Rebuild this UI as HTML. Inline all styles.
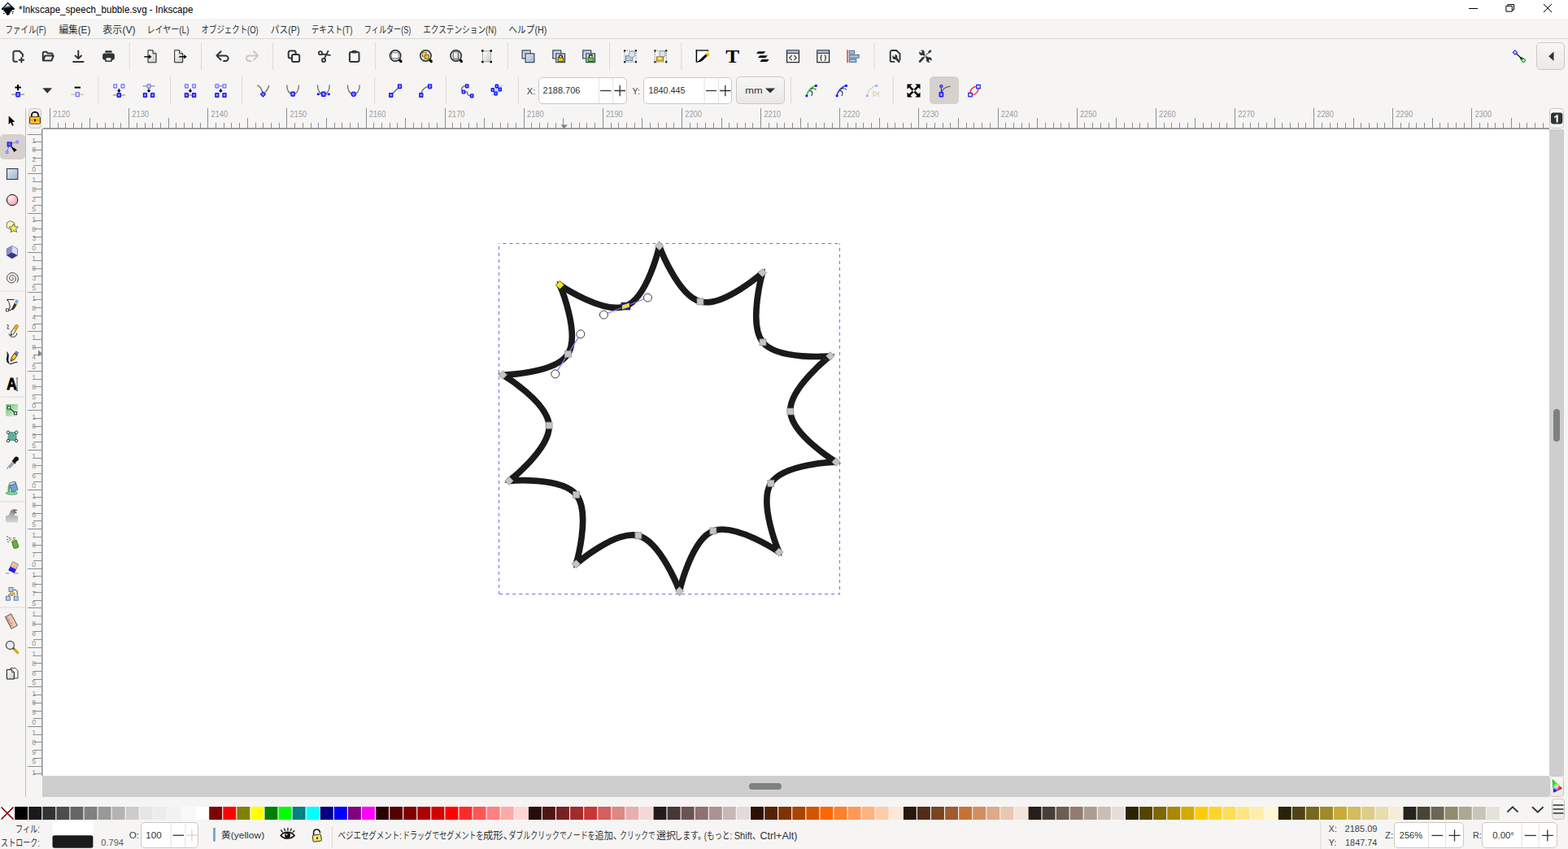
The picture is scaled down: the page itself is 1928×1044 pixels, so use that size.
<!DOCTYPE html>
<html lang="ja"><head><meta charset="utf-8"><title>*Inkscape_speech_bubble.svg - Inkscape</title>
<style>
html,body{margin:0;padding:0}
body{width:1928px;height:1044px;overflow:hidden;position:relative;background:#f6f5f4;font-family:"Liberation Sans",sans-serif;}
.abs{position:absolute}
.t{position:absolute;white-space:pre;line-height:0;transform-origin:0 0;font-family:"Liberation Sans",sans-serif}
.box{position:absolute;box-sizing:border-box;border:1px solid #cdc7c2;border-radius:5px;background:#fff}
.btn{position:absolute;box-sizing:border-box;border:1px solid #cdc7c2;border-radius:5px;background:linear-gradient(#f7f6f5,#ebe9e7)}
svg{position:absolute;left:0;top:0}
text{font-family:"Liberation Sans",sans-serif;white-space:pre}
text.jp{font-family:"Liberation Sans","Noto Sans CJK JP",sans-serif}
</style></head>
<body>
<div class="abs" style="left:0;top:0;width:1928px;height:23px;background:#fff"></div>
<div class="abs" style="left:0;top:47px;width:1928px;height:1px;background:#dcd9d6"></div>
<div class="abs" style="left:52px;top:159px;width:1853px;height:795px;background:#fff"></div>
<div class="abs" style="left:52px;top:954px;width:1853px;height:26px;background:#cecece"></div>
<div class="abs" style="left:1905px;top:159px;width:18px;height:794.5px;background:#cecece"></div>
<div class="abs" style="left:921px;top:963px;width:40px;height:8px;border-radius:4px;background:#7e8182"></div>
<div class="abs" style="left:1910px;top:503px;width:8px;height:40px;border-radius:4px;background:#7e8182"></div>
<div class="abs" style="left:31px;top:133px;width:1px;height:847px;background:#c2beba"></div>
<div class="abs" style="left:0;top:165px;width:30.5px;height:31px;border-radius:5px;background:#d6d1cd"></div>
<div class="abs" style="left:1143px;top:94.3px;width:36px;height:33.3px;border-radius:5px;background:#d6d1cd"></div>
<div class="box" style="left:661.7px;top:94.7px;width:109.0px;height:33.0px"></div>
<div class="box" style="left:790.6px;top:94.7px;width:109.8px;height:33.0px"></div>
<div class="btn" style="left:905.1px;top:94.3px;width:59.6px;height:33.3px"></div>
<div class="btn" style="left:1888.5px;top:52px;width:35px;height:34px"></div>
<div class="btn" style="left:34.6px;top:133.2px;width:16.8px;height:25px;border-radius:4px;background:#efedeb"></div>
<div class="btn" style="left:1905.3px;top:132.6px;width:17.3px;height:25.5px;border-radius:4px;background:#f8f7f6"></div>
<div class="btn" style="left:1905px;top:954px;width:18px;height:25.5px;border-radius:4px"></div>
<div class="btn" style="left:1907.6px;top:982.3px;width:16.6px;height:25.8px;border-radius:4px"></div>
<div class="box" style="left:173.3px;top:1010.5px;width:71.1px;height:32.9px"></div>
<div class="box" style="left:1713.9px;top:1011.0px;width:86.6px;height:32.2px"></div>
<div class="box" style="left:1822.1px;top:1011.0px;width:93.0px;height:32.2px"></div>
<div class="abs" style="left:1908px;top:957px;width:14px;height:19px;clip-path:polygon(1px 1.8px,12.8px 12.400px,2.300px 17.400px);background:radial-gradient(circle at 5.500px 11px,rgba(255,255,255,.95) 0,rgba(255,255,255,0) 4.500px),conic-gradient(from 0deg at 5.500px 11px,#80ff00 0deg,#ffff00 40deg,#ff0000 101deg,#ff00ff 155deg,#0000ff 206deg,#00ffff 270deg,#00ff00 334deg,#80ff00 360deg)"></div>
<svg width="1928" height="1044" viewBox="0 0 1928 1044">
<path d="M61 133V158M71 151V158M80 151V158M90 151V158M100 151V158M110 145V158M119 151V158M129 151V158M139 151V158M148 151V158M158 133V158M168 151V158M178 151V158M187 151V158M197 151V158M207 145V158M216 151V158M226 151V158M236 151V158M246 151V158M255 133V158M265 151V158M275 151V158M284 151V158M294 151V158M304 145V158M314 151V158M323 151V158M333 151V158M343 151V158M352 133V158M362 151V158M372 151V158M382 151V158M391 151V158M401 145V158M411 151V158M420 151V158M430 151V158M440 151V158M450 133V158M459 151V158M469 151V158M479 151V158M488 151V158M498 145V158M508 151V158M518 151V158M527 151V158M537 151V158M547 133V158M556 151V158M566 151V158M576 151V158M586 151V158M595 145V158M605 151V158M615 151V158M624 151V158M634 151V158M644 133V158M653 151V158M663 151V158M673 151V158M683 151V158M692 145V158M702 151V158M712 151V158M721 151V158M731 151V158M741 133V158M751 151V158M760 151V158M770 151V158M780 151V158M789 145V158M799 151V158M809 151V158M819 151V158M828 151V158M838 133V158M848 151V158M857 151V158M867 151V158M877 151V158M887 145V158M896 151V158M906 151V158M916 151V158M925 151V158M935 133V158M945 151V158M955 151V158M964 151V158M974 151V158M984 145V158M993 151V158M1003 151V158M1013 151V158M1023 151V158M1032 133V158M1042 151V158M1052 151V158M1061 151V158M1071 151V158M1081 145V158M1091 151V158M1100 151V158M1110 151V158M1120 151V158M1129 133V158M1139 151V158M1149 151V158M1159 151V158M1168 151V158M1178 145V158M1188 151V158M1197 151V158M1207 151V158M1217 151V158M1227 133V158M1236 151V158M1246 151V158M1256 151V158M1265 151V158M1275 145V158M1285 151V158M1295 151V158M1304 151V158M1314 151V158M1324 133V158M1333 151V158M1343 151V158M1353 151V158M1363 151V158M1372 145V158M1382 151V158M1392 151V158M1401 151V158M1411 151V158M1421 133V158M1431 151V158M1440 151V158M1450 151V158M1460 151V158M1469 145V158M1479 151V158M1489 151V158M1499 151V158M1508 151V158M1518 133V158M1528 151V158M1537 151V158M1547 151V158M1557 151V158M1567 145V158M1576 151V158M1586 151V158M1596 151V158M1605 151V158M1615 133V158M1625 151V158M1635 151V158M1644 151V158M1654 151V158M1664 145V158M1673 151V158M1683 151V158M1693 151V158M1702 151V158M1712 133V158M1722 151V158M1732 151V158M1741 151V158M1751 151V158M1761 145V158M1770 151V158M1780 151V158M1790 151V158M1800 151V158M1809 133V158M1819 151V158M1829 151V158M1838 151V158M1848 151V158M1858 145V158M1868 151V158M1877 151V158M1887 151V158M1897 151V158" stroke="#8a8e90" stroke-width="1" shape-rendering="crispEdges" transform="translate(.5 0)" fill="none"/>
<path d="M34 165H52M41 174H52M41 184H52M41 194H52M41 203H52M34 213H52M41 223H52M41 232H52M41 242H52M41 252H52M34 262H52M41 271H52M41 281H52M41 291H52M41 300H52M34 310H52M41 320H52M41 330H52M41 339H52M41 349H52M34 359H52M41 368H52M41 378H52M41 388H52M41 398H52M34 407H52M41 417H52M41 427H52M41 436H52M41 446H52M34 456H52M41 466H52M41 475H52M41 485H52M41 495H52M34 504H52M41 514H52M41 524H52M41 534H52M41 543H52M34 553H52M41 563H52M41 572H52M41 582H52M41 592H52M34 602H52M41 611H52M41 621H52M41 631H52M41 640H52M34 650H52M41 660H52M41 670H52M41 679H52M41 689H52M34 699H52M41 708H52M41 718H52M41 728H52M41 738H52M34 747H52M41 757H52M41 767H52M41 776H52M41 786H52M34 796H52M41 806H52M41 815H52M41 825H52M41 835H52M34 844H52M41 854H52M41 864H52M41 874H52M41 883H52M34 893H52M41 903H52M41 912H52M41 922H52M41 932H52M34 942H52M41 951H52" stroke="#8a8e90" stroke-width="1" shape-rendering="crispEdges" transform="translate(0 .5)" fill="none"/>
<rect x="53" y="157.3" width="1852" height="1.7" fill="#8b8f91"/>
<rect x="51" y="158.500" width="1.500" height="795.500" fill="#8b8f91"/>
<path d="M689.5 153.5h8.4l-4.2 4.5z" fill="#7b7f81"/>
<path d="M47 430.5v8l4.5-4z" fill="#7b7f81"/>
<text transform="translate(65.23 143.60) scale(0.9273 1)" font-size="10.00" fill="#9a9c9c">2120</text>
<text transform="translate(162.36 143.60) scale(0.9273 1)" font-size="10.00" fill="#9a9c9c">2130</text>
<text transform="translate(259.49 143.60) scale(0.9273 1)" font-size="10.00" fill="#9a9c9c">2140</text>
<text transform="translate(356.62 143.60) scale(0.9273 1)" font-size="10.00" fill="#9a9c9c">2150</text>
<text transform="translate(453.75 143.60) scale(0.9273 1)" font-size="10.00" fill="#9a9c9c">2160</text>
<text transform="translate(550.88 143.60) scale(0.9273 1)" font-size="10.00" fill="#9a9c9c">2170</text>
<text transform="translate(648.01 143.60) scale(0.9273 1)" font-size="10.00" fill="#9a9c9c">2180</text>
<text transform="translate(745.14 143.60) scale(0.9273 1)" font-size="10.00" fill="#9a9c9c">2190</text>
<text transform="translate(842.27 143.60) scale(0.9273 1)" font-size="10.00" fill="#9a9c9c">2200</text>
<text transform="translate(939.40 143.60) scale(0.9273 1)" font-size="10.00" fill="#9a9c9c">2210</text>
<text transform="translate(1036.53 143.60) scale(0.9273 1)" font-size="10.00" fill="#9a9c9c">2220</text>
<text transform="translate(1133.66 143.60) scale(0.9273 1)" font-size="10.00" fill="#9a9c9c">2230</text>
<text transform="translate(1230.79 143.60) scale(0.9273 1)" font-size="10.00" fill="#9a9c9c">2240</text>
<text transform="translate(1327.92 143.60) scale(0.9273 1)" font-size="10.00" fill="#9a9c9c">2250</text>
<text transform="translate(1425.05 143.60) scale(0.9273 1)" font-size="10.00" fill="#9a9c9c">2260</text>
<text transform="translate(1522.18 143.60) scale(0.9273 1)" font-size="10.00" fill="#9a9c9c">2270</text>
<text transform="translate(1619.31 143.60) scale(0.9273 1)" font-size="10.00" fill="#9a9c9c">2280</text>
<text transform="translate(1716.44 143.60) scale(0.9273 1)" font-size="10.00" fill="#9a9c9c">2290</text>
<text transform="translate(1813.57 143.60) scale(0.9273 1)" font-size="10.00" fill="#9a9c9c">2300</text>
<text transform="translate(39.13 175.60) scale(1.0000 1)" font-size="8.80" fill="#8f9192">1</text>
<text transform="translate(39.25 187.40) scale(1.0000 1)" font-size="8.80" fill="#8f9192">8</text>
<text transform="translate(39.25 199.20) scale(1.0000 1)" font-size="8.80" fill="#8f9192">2</text>
<text transform="translate(39.25 211.00) scale(1.0000 1)" font-size="8.80" fill="#8f9192">0</text>
<text transform="translate(39.13 224.16) scale(1.0000 1)" font-size="8.80" fill="#8f9192">1</text>
<text transform="translate(39.25 235.97) scale(1.0000 1)" font-size="8.80" fill="#8f9192">8</text>
<text transform="translate(39.25 247.76) scale(1.0000 1)" font-size="8.80" fill="#8f9192">2</text>
<text transform="translate(39.26 259.56) scale(1.0000 1)" font-size="8.80" fill="#8f9192">5</text>
<text transform="translate(39.13 272.73) scale(1.0000 1)" font-size="8.80" fill="#8f9192">1</text>
<text transform="translate(39.25 284.53) scale(1.0000 1)" font-size="8.80" fill="#8f9192">8</text>
<text transform="translate(39.28 296.33) scale(1.0000 1)" font-size="8.80" fill="#8f9192">3</text>
<text transform="translate(39.25 308.13) scale(1.0000 1)" font-size="8.80" fill="#8f9192">0</text>
<text transform="translate(39.13 321.30) scale(1.0000 1)" font-size="8.80" fill="#8f9192">1</text>
<text transform="translate(39.25 333.10) scale(1.0000 1)" font-size="8.80" fill="#8f9192">8</text>
<text transform="translate(39.28 344.90) scale(1.0000 1)" font-size="8.80" fill="#8f9192">3</text>
<text transform="translate(39.26 356.70) scale(1.0000 1)" font-size="8.80" fill="#8f9192">5</text>
<text transform="translate(39.13 369.86) scale(1.0000 1)" font-size="8.80" fill="#8f9192">1</text>
<text transform="translate(39.25 381.66) scale(1.0000 1)" font-size="8.80" fill="#8f9192">8</text>
<text transform="translate(39.28 393.46) scale(1.0000 1)" font-size="8.80" fill="#8f9192">4</text>
<text transform="translate(39.25 405.26) scale(1.0000 1)" font-size="8.80" fill="#8f9192">0</text>
<text transform="translate(39.13 418.43) scale(1.0000 1)" font-size="8.80" fill="#8f9192">1</text>
<text transform="translate(39.25 430.23) scale(1.0000 1)" font-size="8.80" fill="#8f9192">8</text>
<text transform="translate(39.28 442.03) scale(1.0000 1)" font-size="8.80" fill="#8f9192">4</text>
<text transform="translate(39.26 453.83) scale(1.0000 1)" font-size="8.80" fill="#8f9192">5</text>
<text transform="translate(39.13 466.99) scale(1.0000 1)" font-size="8.80" fill="#8f9192">1</text>
<text transform="translate(39.25 478.79) scale(1.0000 1)" font-size="8.80" fill="#8f9192">8</text>
<text transform="translate(39.26 490.59) scale(1.0000 1)" font-size="8.80" fill="#8f9192">5</text>
<text transform="translate(39.25 502.39) scale(1.0000 1)" font-size="8.80" fill="#8f9192">0</text>
<text transform="translate(39.13 515.55) scale(1.0000 1)" font-size="8.80" fill="#8f9192">1</text>
<text transform="translate(39.25 527.35) scale(1.0000 1)" font-size="8.80" fill="#8f9192">8</text>
<text transform="translate(39.26 539.15) scale(1.0000 1)" font-size="8.80" fill="#8f9192">5</text>
<text transform="translate(39.26 550.95) scale(1.0000 1)" font-size="8.80" fill="#8f9192">5</text>
<text transform="translate(39.13 564.12) scale(1.0000 1)" font-size="8.80" fill="#8f9192">1</text>
<text transform="translate(39.25 575.92) scale(1.0000 1)" font-size="8.80" fill="#8f9192">8</text>
<text transform="translate(39.22 587.72) scale(1.0000 1)" font-size="8.80" fill="#8f9192">6</text>
<text transform="translate(39.25 599.52) scale(1.0000 1)" font-size="8.80" fill="#8f9192">0</text>
<text transform="translate(39.13 612.69) scale(1.0000 1)" font-size="8.80" fill="#8f9192">1</text>
<text transform="translate(39.25 624.49) scale(1.0000 1)" font-size="8.80" fill="#8f9192">8</text>
<text transform="translate(39.22 636.29) scale(1.0000 1)" font-size="8.80" fill="#8f9192">6</text>
<text transform="translate(39.26 648.09) scale(1.0000 1)" font-size="8.80" fill="#8f9192">5</text>
<text transform="translate(39.13 661.25) scale(1.0000 1)" font-size="8.80" fill="#8f9192">1</text>
<text transform="translate(39.25 673.05) scale(1.0000 1)" font-size="8.80" fill="#8f9192">8</text>
<text transform="translate(39.25 684.85) scale(1.0000 1)" font-size="8.80" fill="#8f9192">7</text>
<text transform="translate(39.25 696.65) scale(1.0000 1)" font-size="8.80" fill="#8f9192">0</text>
<text transform="translate(39.13 709.81) scale(1.0000 1)" font-size="8.80" fill="#8f9192">1</text>
<text transform="translate(39.25 721.61) scale(1.0000 1)" font-size="8.80" fill="#8f9192">8</text>
<text transform="translate(39.25 733.41) scale(1.0000 1)" font-size="8.80" fill="#8f9192">7</text>
<text transform="translate(39.26 745.21) scale(1.0000 1)" font-size="8.80" fill="#8f9192">5</text>
<text transform="translate(39.13 758.38) scale(1.0000 1)" font-size="8.80" fill="#8f9192">1</text>
<text transform="translate(39.25 770.18) scale(1.0000 1)" font-size="8.80" fill="#8f9192">8</text>
<text transform="translate(39.25 781.98) scale(1.0000 1)" font-size="8.80" fill="#8f9192">8</text>
<text transform="translate(39.25 793.78) scale(1.0000 1)" font-size="8.80" fill="#8f9192">0</text>
<text transform="translate(39.13 806.95) scale(1.0000 1)" font-size="8.80" fill="#8f9192">1</text>
<text transform="translate(39.25 818.75) scale(1.0000 1)" font-size="8.80" fill="#8f9192">8</text>
<text transform="translate(39.25 830.55) scale(1.0000 1)" font-size="8.80" fill="#8f9192">8</text>
<text transform="translate(39.26 842.35) scale(1.0000 1)" font-size="8.80" fill="#8f9192">5</text>
<text transform="translate(39.13 855.51) scale(1.0000 1)" font-size="8.80" fill="#8f9192">1</text>
<text transform="translate(39.25 867.31) scale(1.0000 1)" font-size="8.80" fill="#8f9192">8</text>
<text transform="translate(39.26 879.11) scale(1.0000 1)" font-size="8.80" fill="#8f9192">9</text>
<text transform="translate(39.25 890.91) scale(1.0000 1)" font-size="8.80" fill="#8f9192">0</text>
<text transform="translate(39.13 904.07) scale(1.0000 1)" font-size="8.80" fill="#8f9192">1</text>
<text transform="translate(39.25 915.87) scale(1.0000 1)" font-size="8.80" fill="#8f9192">8</text>
<text transform="translate(39.26 927.67) scale(1.0000 1)" font-size="8.80" fill="#8f9192">9</text>
<text transform="translate(39.26 939.47) scale(1.0000 1)" font-size="8.80" fill="#8f9192">5</text>
<text transform="translate(39.13 952.64) scale(1.0000 1)" font-size="8.80" fill="#8f9192">1</text>
<rect x="18.20" y="992" width="15.9" height="16" fill="#000000"/>
<rect x="35.27" y="992" width="15.9" height="16" fill="#1a1a1a"/>
<rect x="52.35" y="992" width="15.9" height="16" fill="#333333"/>
<rect x="69.42" y="992" width="15.9" height="16" fill="#4d4d4d"/>
<rect x="86.49" y="992" width="15.9" height="16" fill="#666666"/>
<rect x="103.57" y="992" width="15.9" height="16" fill="#808080"/>
<rect x="120.64" y="992" width="15.9" height="16" fill="#999999"/>
<rect x="137.71" y="992" width="15.9" height="16" fill="#b3b3b3"/>
<rect x="154.78" y="992" width="15.9" height="16" fill="#cccccc"/>
<rect x="171.86" y="992" width="15.9" height="16" fill="#e6e6e6"/>
<rect x="188.93" y="992" width="15.9" height="16" fill="#ececec"/>
<rect x="206.00" y="992" width="15.9" height="16" fill="#f2f2f2"/>
<rect x="223.08" y="992" width="15.9" height="16" fill="#f9f9f9"/>
<rect x="240.15" y="992" width="15.9" height="16" fill="#ffffff"/>
<rect x="257.22" y="992" width="15.9" height="16" fill="#800000"/>
<rect x="274.30" y="992" width="15.9" height="16" fill="#ff0000"/>
<rect x="291.37" y="992" width="15.9" height="16" fill="#808000"/>
<rect x="308.44" y="992" width="15.9" height="16" fill="#ffff00"/>
<rect x="325.51" y="992" width="15.9" height="16" fill="#008000"/>
<rect x="342.59" y="992" width="15.9" height="16" fill="#00ff00"/>
<rect x="359.66" y="992" width="15.9" height="16" fill="#008080"/>
<rect x="376.73" y="992" width="15.9" height="16" fill="#00ffff"/>
<rect x="393.81" y="992" width="15.9" height="16" fill="#000080"/>
<rect x="410.88" y="992" width="15.9" height="16" fill="#0000ff"/>
<rect x="427.95" y="992" width="15.9" height="16" fill="#800080"/>
<rect x="445.02" y="992" width="15.9" height="16" fill="#ff00ff"/>
<rect x="462.10" y="992" width="15.9" height="16" fill="#2b0000"/>
<rect x="479.17" y="992" width="15.9" height="16" fill="#550000"/>
<rect x="496.24" y="992" width="15.9" height="16" fill="#800000"/>
<rect x="513.32" y="992" width="15.9" height="16" fill="#aa0000"/>
<rect x="530.39" y="992" width="15.9" height="16" fill="#d40000"/>
<rect x="547.46" y="992" width="15.9" height="16" fill="#ff0000"/>
<rect x="564.54" y="992" width="15.9" height="16" fill="#ff2a2a"/>
<rect x="581.61" y="992" width="15.9" height="16" fill="#ff5555"/>
<rect x="598.68" y="992" width="15.9" height="16" fill="#ff8080"/>
<rect x="615.76" y="992" width="15.9" height="16" fill="#ffaaaa"/>
<rect x="632.83" y="992" width="15.9" height="16" fill="#ffd5d5"/>
<rect x="649.90" y="992" width="15.9" height="16" fill="#280b0b"/>
<rect x="666.97" y="992" width="15.9" height="16" fill="#501616"/>
<rect x="684.05" y="992" width="15.9" height="16" fill="#782121"/>
<rect x="701.12" y="992" width="15.9" height="16" fill="#a02c2c"/>
<rect x="718.19" y="992" width="15.9" height="16" fill="#c83737"/>
<rect x="735.27" y="992" width="15.9" height="16" fill="#d35f5f"/>
<rect x="752.34" y="992" width="15.9" height="16" fill="#de8787"/>
<rect x="769.41" y="992" width="15.9" height="16" fill="#e9afaf"/>
<rect x="786.49" y="992" width="15.9" height="16" fill="#f4d7d7"/>
<rect x="803.56" y="992" width="15.9" height="16" fill="#241c1c"/>
<rect x="820.63" y="992" width="15.9" height="16" fill="#483737"/>
<rect x="837.70" y="992" width="15.9" height="16" fill="#6c5353"/>
<rect x="854.78" y="992" width="15.9" height="16" fill="#916f6f"/>
<rect x="871.85" y="992" width="15.9" height="16" fill="#ac9393"/>
<rect x="888.92" y="992" width="15.9" height="16" fill="#c8b7b7"/>
<rect x="906.00" y="992" width="15.9" height="16" fill="#e3dbdb"/>
<rect x="923.07" y="992" width="15.9" height="16" fill="#2b1100"/>
<rect x="940.14" y="992" width="15.9" height="16" fill="#552200"/>
<rect x="957.22" y="992" width="15.9" height="16" fill="#803300"/>
<rect x="974.29" y="992" width="15.9" height="16" fill="#aa4400"/>
<rect x="991.36" y="992" width="15.9" height="16" fill="#d45500"/>
<rect x="1008.43" y="992" width="15.9" height="16" fill="#ff6600"/>
<rect x="1025.51" y="992" width="15.9" height="16" fill="#ff7f2a"/>
<rect x="1042.58" y="992" width="15.9" height="16" fill="#ff9955"/>
<rect x="1059.65" y="992" width="15.9" height="16" fill="#ffb380"/>
<rect x="1076.73" y="992" width="15.9" height="16" fill="#ffccaa"/>
<rect x="1093.80" y="992" width="15.9" height="16" fill="#ffe6d5"/>
<rect x="1110.87" y="992" width="15.9" height="16" fill="#28170b"/>
<rect x="1127.95" y="992" width="15.9" height="16" fill="#502d16"/>
<rect x="1145.02" y="992" width="15.9" height="16" fill="#784421"/>
<rect x="1162.09" y="992" width="15.9" height="16" fill="#a05a2c"/>
<rect x="1179.16" y="992" width="15.9" height="16" fill="#c87137"/>
<rect x="1196.24" y="992" width="15.9" height="16" fill="#d38d5f"/>
<rect x="1213.31" y="992" width="15.9" height="16" fill="#deaa87"/>
<rect x="1230.38" y="992" width="15.9" height="16" fill="#e9c6af"/>
<rect x="1247.46" y="992" width="15.9" height="16" fill="#f4e3d7"/>
<rect x="1264.53" y="992" width="15.9" height="16" fill="#241f1c"/>
<rect x="1281.60" y="992" width="15.9" height="16" fill="#483e37"/>
<rect x="1298.68" y="992" width="15.9" height="16" fill="#6c5d53"/>
<rect x="1315.75" y="992" width="15.9" height="16" fill="#917c6f"/>
<rect x="1332.82" y="992" width="15.9" height="16" fill="#ac9d93"/>
<rect x="1349.89" y="992" width="15.9" height="16" fill="#c8beb7"/>
<rect x="1366.97" y="992" width="15.9" height="16" fill="#e3dedb"/>
<rect x="1384.04" y="992" width="15.9" height="16" fill="#2b2200"/>
<rect x="1401.11" y="992" width="15.9" height="16" fill="#554400"/>
<rect x="1418.19" y="992" width="15.9" height="16" fill="#806600"/>
<rect x="1435.26" y="992" width="15.9" height="16" fill="#aa8800"/>
<rect x="1452.33" y="992" width="15.9" height="16" fill="#d4aa00"/>
<rect x="1469.40" y="992" width="15.9" height="16" fill="#ffcc00"/>
<rect x="1486.48" y="992" width="15.9" height="16" fill="#ffd42a"/>
<rect x="1503.55" y="992" width="15.9" height="16" fill="#ffdd55"/>
<rect x="1520.62" y="992" width="15.9" height="16" fill="#ffe680"/>
<rect x="1537.70" y="992" width="15.9" height="16" fill="#ffeeaa"/>
<rect x="1554.77" y="992" width="15.9" height="16" fill="#fff6d5"/>
<rect x="1571.84" y="992" width="15.9" height="16" fill="#28220b"/>
<rect x="1588.92" y="992" width="15.9" height="16" fill="#504416"/>
<rect x="1605.99" y="992" width="15.9" height="16" fill="#786721"/>
<rect x="1623.06" y="992" width="15.9" height="16" fill="#a0892c"/>
<rect x="1640.13" y="992" width="15.9" height="16" fill="#c8ab37"/>
<rect x="1657.21" y="992" width="15.9" height="16" fill="#d3bc5f"/>
<rect x="1674.28" y="992" width="15.9" height="16" fill="#decd87"/>
<rect x="1691.35" y="992" width="15.9" height="16" fill="#e9ddaf"/>
<rect x="1708.43" y="992" width="15.9" height="16" fill="#f4eed7"/>
<rect x="1725.50" y="992" width="15.9" height="16" fill="#24221c"/>
<rect x="1742.57" y="992" width="15.9" height="16" fill="#484537"/>
<rect x="1759.65" y="992" width="15.9" height="16" fill="#6c6753"/>
<rect x="1776.72" y="992" width="15.9" height="16" fill="#918a6f"/>
<rect x="1793.79" y="992" width="15.9" height="16" fill="#aca793"/>
<rect x="1810.87" y="992" width="15.9" height="16" fill="#c8c4b7"/>
<rect x="1827.94" y="992" width="15.9" height="16" fill="#e3e2db"/>
<rect x="0.5" y="992" width="16.6" height="16" fill="#fff"/>
<path d="M1.5 992.5L16.5 1007.5M16.5 992.5L1.5 1007.5" stroke="#7a0000" stroke-width="1.6" fill="none"/>
<path d="M810.7 302.6C810.7 302.6 833.0 363.5 861.0 370.9C889.0 378.3 937.6 335.4 937.6 335.4C937.6 335.4 919.7 398.4 938.0 420.9C956.3 443.4 1020.8 437.8 1020.8 437.8C1020.8 437.8 970.1 477.0 971.8 506.0C973.5 535.0 1028.0 568.1 1028.0 568.1C1028.0 568.1 963.5 569.9 947.9 594.3C932.3 618.7 957.9 679.0 957.9 679.0C957.9 679.0 903.9 642.4 876.9 652.9C849.9 663.4 835.5 726.8 835.5 726.8C835.5 726.8 812.9 666.1 784.9 658.7C756.9 651.3 708.3 693.6 708.3 693.6C708.3 693.6 726.9 630.8 708.5 608.3C690.1 585.8 626.0 591.3 626.0 591.3C626.0 591.3 676.8 552.1 675.1 523.1C673.4 494.1 618.3 461.0 618.3 461.0C618.3 461.0 682.8 459.8 698.3 435.3C713.8 410.8 688.4 350.5 688.4 350.5C688.4 350.5 742.4 387.0 769.4 376.5C796.4 366.0 810.7 302.6 810.7 302.6Z" fill="#fff" stroke="#1a1a1a" stroke-width="7.7" stroke-linejoin="bevel"/>
<path d="M810.3 296.4L814.2 303.9L807.4 304.3z" fill="#1a1a1a"/>
<path d="M940.9 330.2L939.7 338.5L933.9 334.8z" fill="#1a1a1a"/>
<path d="M1026.6 435.6L1020.6 441.5L1018.2 435.2z" fill="#1a1a1a"/>
<path d="M1034.0 569.7L1025.7 571.0L1027.4 564.4z" fill="#1a1a1a"/>
<path d="M961.8 683.8L954.3 680.0L959.6 675.7z" fill="#1a1a1a"/>
<path d="M835.9 733.0L832.0 725.5L838.8 725.1z" fill="#1a1a1a"/>
<path d="M705.0 698.8L706.2 690.5L712.0 694.2z" fill="#1a1a1a"/>
<path d="M620.2 593.5L626.2 587.6L628.6 593.9z" fill="#1a1a1a"/>
<path d="M612.3 459.4L620.6 458.1L618.9 464.7z" fill="#1a1a1a"/>
<path d="M684.5 345.7L692.0 349.5L686.7 353.8z" fill="#1a1a1a"/>
<g fill="none" stroke="#6e6ee0" stroke-width="1" stroke-dasharray="4 4"><path d="M613.5 299.5H1032.5" stroke-dashoffset="3.1"/><path d="M613.5 299.5V730.5" stroke-dashoffset="4.6"/><path d="M1033 730.5H613.5" stroke-dashoffset="1.2"/><path d="M1032.5 731V299.5" stroke-dashoffset="1.8"/></g>
<path d="M682.8 459.8L713.8 410.8" stroke="#8080f2" stroke-width="1.3" fill="none"/>
<path d="M742.4 387.0L796.4 366.0" stroke="#8080f2" stroke-width="1.3" fill="none"/>
<rect x="857.0" y="366.9" width="8" height="8" fill="#c4c4c4" stroke="#8a8a8a" stroke-width=".7"/>
<rect x="934.0" y="416.9" width="8" height="8" fill="#c4c4c4" stroke="#8a8a8a" stroke-width=".7"/>
<rect x="967.8" y="502.0" width="8" height="8" fill="#c4c4c4" stroke="#8a8a8a" stroke-width=".7"/>
<rect x="943.9" y="590.3" width="8" height="8" fill="#c4c4c4" stroke="#8a8a8a" stroke-width=".7"/>
<rect x="872.9" y="648.9" width="8" height="8" fill="#c4c4c4" stroke="#8a8a8a" stroke-width=".7"/>
<rect x="780.9" y="654.7" width="8" height="8" fill="#c4c4c4" stroke="#8a8a8a" stroke-width=".7"/>
<rect x="704.5" y="604.3" width="8" height="8" fill="#c4c4c4" stroke="#8a8a8a" stroke-width=".7"/>
<rect x="671.1" y="519.1" width="8" height="8" fill="#c4c4c4" stroke="#8a8a8a" stroke-width=".7"/>
<rect x="694.3" y="431.3" width="8" height="8" fill="#c4c4c4" stroke="#8a8a8a" stroke-width=".7"/>
<rect x="763.9" y="372.0" width="11" height="9" fill="#1a1ac8" stroke="#1a1a1a" stroke-width=".5"/>
<path d="M764.9 375.5l9 -3v5l-9 3z" fill="#e6e03a"/>
<path d="M810.7 297.4l5.2 5.2-5.2 5.2-5.2-5.2z" fill="#c4c4c4" stroke="#8a8a8a" stroke-width=".7"/>
<path d="M937.6 330.2l5.2 5.2-5.2 5.2-5.2-5.2z" fill="#c4c4c4" stroke="#8a8a8a" stroke-width=".7"/>
<path d="M1020.8 432.6l5.2 5.2-5.2 5.2-5.2-5.2z" fill="#c4c4c4" stroke="#8a8a8a" stroke-width=".7"/>
<path d="M1028.0 562.9l5.2 5.2-5.2 5.2-5.2-5.2z" fill="#c4c4c4" stroke="#8a8a8a" stroke-width=".7"/>
<path d="M957.9 673.8l5.2 5.2-5.2 5.2-5.2-5.2z" fill="#c4c4c4" stroke="#8a8a8a" stroke-width=".7"/>
<path d="M835.5 721.6l5.2 5.2-5.2 5.2-5.2-5.2z" fill="#c4c4c4" stroke="#8a8a8a" stroke-width=".7"/>
<path d="M708.3 688.4l5.2 5.2-5.2 5.2-5.2-5.2z" fill="#c4c4c4" stroke="#8a8a8a" stroke-width=".7"/>
<path d="M626.0 586.1l5.2 5.2-5.2 5.2-5.2-5.2z" fill="#c4c4c4" stroke="#8a8a8a" stroke-width=".7"/>
<path d="M618.3 455.8l5.2 5.2-5.2 5.2-5.2-5.2z" fill="#c4c4c4" stroke="#8a8a8a" stroke-width=".7"/>
<path d="M688.4 345.3l5.2 5.2-5.2 5.2-5.2-5.2z" fill="#ece81a" stroke="#1a1a1a" stroke-width=".7"/>
<circle cx="682.8" cy="459.8" r="5" fill="#fff" stroke="#3a3a3a" stroke-width="1"/>
<circle cx="713.8" cy="410.8" r="5" fill="#fff" stroke="#3a3a3a" stroke-width="1"/>
<circle cx="742.4" cy="387.0" r="5" fill="#fff" stroke="#3a3a3a" stroke-width="1"/>
<circle cx="796.4" cy="366.0" r="5" fill="#fff" stroke="#3a3a3a" stroke-width="1"/>
<text transform="translate(23.11 16.20) scale(0.9694 1)" font-size="12.00" fill="#000">*Inkscape_speech_bubble.svg - Inkscape</text>
<path d="M1806 10.5h11" stroke="#000" stroke-width="1" fill="none"/>
<path d="M1851.900 7.400h7.400v6.700h-7.400zM1854 7.400v-1.900h7.500v6.600h-2" stroke="#000" stroke-width="1" fill="none"/>
<path d="M1898 5l10 10M1908 5l-10 10" stroke="#000" stroke-width="1" fill="none"/>
<text class="jp" x="6.61" y="40.80" font-size="12" fill="#2e3436" textLength="50.1" lengthAdjust="spacingAndGlyphs">ファイル(F)</text>
<text class="jp" x="72.39" y="40.80" font-size="12" fill="#2e3436" textLength="38.9" lengthAdjust="spacingAndGlyphs">編集(E)</text>
<text class="jp" x="126.25" y="40.80" font-size="12" fill="#2e3436" textLength="40.3" lengthAdjust="spacingAndGlyphs">表示(V)</text>
<text class="jp" x="180.40" y="40.80" font-size="12" fill="#2e3436" textLength="52.1" lengthAdjust="spacingAndGlyphs">レイヤー(L)</text>
<text class="jp" x="247.53" y="40.80" font-size="12" fill="#2e3436" textLength="70.2" lengthAdjust="spacingAndGlyphs">オブジェクト(O)</text>
<text class="jp" x="332.75" y="40.80" font-size="12" fill="#2e3436" textLength="35.7" lengthAdjust="spacingAndGlyphs">パス(P)</text>
<text class="jp" x="382.65" y="40.80" font-size="12" fill="#2e3436" textLength="50.8" lengthAdjust="spacingAndGlyphs">テキスト(T)</text>
<text class="jp" x="447.86" y="40.80" font-size="12" fill="#2e3436" textLength="57.5" lengthAdjust="spacingAndGlyphs">フィルター(S)</text>
<text class="jp" x="520.23" y="40.80" font-size="12" fill="#2e3436" textLength="90.2" lengthAdjust="spacingAndGlyphs">エクステンション(N)</text>
<text class="jp" x="625.27" y="40.80" font-size="12" fill="#2e3436" textLength="47.0" lengthAdjust="spacingAndGlyphs">ヘルプ(H)</text>
<rect x="158.7" y="52.5" width="1" height="33.3" fill="#dcd9d6"/>
<rect x="247.0" y="52.5" width="1" height="33.3" fill="#dcd9d6"/>
<rect x="335.1" y="52.5" width="1" height="33.3" fill="#dcd9d6"/>
<rect x="461.1" y="52.5" width="1" height="33.3" fill="#dcd9d6"/>
<rect x="623.8" y="52.5" width="1" height="33.3" fill="#dcd9d6"/>
<rect x="749.0" y="52.5" width="1" height="33.3" fill="#dcd9d6"/>
<rect x="837.3" y="52.5" width="1" height="33.3" fill="#dcd9d6"/>
<rect x="1074.4" y="52.5" width="1" height="33.3" fill="#dcd9d6"/>
<rect x="120.5" y="94.8" width="1" height="33" fill="#dcd9d6"/>
<rect x="209.1" y="94.8" width="1" height="33" fill="#dcd9d6"/>
<rect x="297.0" y="94.8" width="1" height="33" fill="#dcd9d6"/>
<rect x="460.1" y="94.8" width="1" height="33" fill="#dcd9d6"/>
<rect x="548.1" y="94.8" width="1" height="33" fill="#dcd9d6"/>
<rect x="636.9" y="94.8" width="1" height="33" fill="#dcd9d6"/>
<rect x="972.1" y="94.8" width="1" height="33" fill="#dcd9d6"/>
<rect x="1097.7" y="94.8" width="1" height="33" fill="#dcd9d6"/>
<rect x="0" y="357.5" width="30.5" height="1" fill="#dcd9d6"/>
<rect x="0" y="487.5" width="30.5" height="1" fill="#dcd9d6"/>
<rect x="0" y="616.5" width="30.5" height="1" fill="#dcd9d6"/>
<rect x="0" y="746.5" width="30.5" height="1" fill="#dcd9d6"/>
<text transform="translate(647.75 115.60) scale(0.9647 1)" font-size="11.60" fill="#3d4346">X:</text>
<rect x="735.8" y="95.7" width="1" height="31.0" fill="#e4e1de"/>
<rect x="753.2" y="95.7" width="1" height="31.0" fill="#e4e1de"/>
<text transform="translate(667.55 115.30) scale(0.9495 1)" font-size="11.60" fill="#2e3436">2188.706</text>
<path d="M738.0 111.5H751.6" stroke="#2e3436" stroke-width="1.3" fill="none"/>
<path d="M755.4 111.5H769.0M762.2 104.7V118.3" stroke="#2e3436" stroke-width="1.3" fill="none"/>
<text transform="translate(777.57 115.60) scale(0.9019 1)" font-size="11.60" fill="#3d4346">Y:</text>
<rect x="865.6" y="95.7" width="1" height="31.0" fill="#e4e1de"/>
<rect x="883.1" y="95.7" width="1" height="31.0" fill="#e4e1de"/>
<text transform="translate(797.48 115.30) scale(0.9317 1)" font-size="11.60" fill="#2e3436">1840.445</text>
<path d="M868.0 111.5H881.1" stroke="#2e3436" stroke-width="1.3" fill="none"/>
<path d="M885.1 111.5H898.5M891.8 104.8V118.2" stroke="#2e3436" stroke-width="1.3" fill="none"/>
<text transform="translate(916.25 115.30) scale(1.1073 1)" font-size="11.60" fill="#2e3436">mm</text>
<path d="M941 108.6h12l-6 6z" fill="#2e3436"/>
<path d="M1910.5 63.5v11.5l-6.3-5.75z" fill="#2e3436"/>
<rect x="1907" y="138.5" width="14.3" height="13.9" rx="3" fill="#2e3436"/>
<path d="M1911.300 143.500l2.700-2.300h1.700v9.200h-2.100v-6.600l-2.300 1.700z" fill="#fff"/>
<path d="M1909.5 990h13M1909.5 995h13M1909.5 1000h13" stroke="#2e3436" stroke-width="1.6" fill="none"/>
<path d="M1853.3 998.6l6.6-6.2 6.6 6.2M1884 992.3l6.8 6.3 6.8-6.3" stroke="#2e3436" stroke-width="1.9" fill="none"/>
<text class="jp" x="18.92" y="1023.90" font-size="12" fill="#2e3436" textLength="29.9" lengthAdjust="spacingAndGlyphs">フィル:</text>
<text class="jp" x="1.11" y="1040.70" font-size="12" fill="#2e3436" textLength="47.7" lengthAdjust="spacingAndGlyphs">ストローク:</text>
<rect x="64.5" y="1010" width="49.9" height="15.6" rx="2.5" fill="#fff"/>
<rect x="64.5" y="1027.2" width="49.9" height="15.6" rx="2.5" fill="#1a1a1a"/>
<text transform="translate(124.27 1040.30) scale(0.9562 1)" font-size="11.60" fill="#555b5e">0.794</text>
<text transform="translate(158.75 1031.00) scale(1.0059 1)" font-size="11.60" fill="#3d4346">O:</text>
<rect x="209.6" y="1011.5" width="1" height="30.9" fill="#e4e1de"/>
<rect x="227.4" y="1011.5" width="1" height="30.9" fill="#e4e1de"/>
<text transform="translate(179.32 1031.20) scale(0.9990 1)" font-size="11.60" fill="#2e3436">100</text>
<path d="M212.5 1027.2H226.0" stroke="#2e3436" stroke-width="1.3" fill="none"/>
<path d="M229.2 1027.2H242.6M235.9 1020.5V1034.0" stroke="#d3d3d3" stroke-width="1.3" fill="none"/>
<rect x="262.1" y="1017.9" width="2.7" height="16.8" fill="#729fcf"/>
<text class="jp" x="271.68" y="1031.30" font-size="11.5" fill="#2e3436" textLength="53.5" lengthAdjust="spacingAndGlyphs">黄(yellow)</text>
<rect x="408" y="1016" width="1" height="26.5" fill="#dcd9d6"/>
<text class="jp" x="415.47" y="1031.60" font-size="12.3" fill="#2e3436" textLength="78.4" lengthAdjust="spacingAndGlyphs">ベジエセグメント:</text>
<text class="jp" x="494.91" y="1031.60" font-size="12.3" fill="#2e3436" textLength="99.8" lengthAdjust="spacingAndGlyphs">ドラッグでセグメントを</text>
<text class="jp" x="593.95" y="1031.60" font-size="12.3" fill="#2e3436" textLength="37.2" lengthAdjust="spacingAndGlyphs">成形、</text>
<text class="jp" x="625.46" y="1031.60" font-size="12.3" fill="#2e3436" textLength="71.4" lengthAdjust="spacingAndGlyphs">ダブルクリックで</text>
<text class="jp" x="695.95" y="1031.60" font-size="12.3" fill="#2e3436" textLength="35.6" lengthAdjust="spacingAndGlyphs">ノードを</text>
<text class="jp" x="731.60" y="1031.60" font-size="12.3" fill="#2e3436" textLength="33.2" lengthAdjust="spacingAndGlyphs">追加、</text>
<text class="jp" x="762.24" y="1031.60" font-size="12.3" fill="#2e3436" textLength="43.5" lengthAdjust="spacingAndGlyphs">クリックで</text>
<text class="jp" x="807.10" y="1031.60" font-size="12.3" fill="#2e3436" textLength="23.8" lengthAdjust="spacingAndGlyphs">選択</text>
<text class="jp" x="829.32" y="1031.60" font-size="12.3" fill="#2e3436" textLength="38.5" lengthAdjust="spacingAndGlyphs">します。</text>
<text class="jp" x="865.73" y="1031.60" font-size="12.3" fill="#2e3436" textLength="34.3" lengthAdjust="spacingAndGlyphs">(もっと:</text>
<text class="jp" x="902.70" y="1031.60" font-size="12.3" fill="#2e3436" textLength="33.2" lengthAdjust="spacingAndGlyphs">Shift、</text>
<text class="jp" x="934.41" y="1031.60" font-size="12.3" fill="#2e3436" textLength="46.1" lengthAdjust="spacingAndGlyphs">Ctrl+Alt)</text>
<rect x="1623.3" y="1010.5" width="1" height="34" fill="#dcd9d6"/>
<text transform="translate(1633.45 1022.80) scale(0.9543 1)" font-size="11.60" fill="#3d4346">X:</text>
<text transform="translate(1653.54 1022.90) scale(0.9535 1)" font-size="11.60" fill="#3d4346">2185.09</text>
<text transform="translate(1633.46 1039.70) scale(0.9538 1)" font-size="11.60" fill="#3d4346">Y:</text>
<text transform="translate(1654.07 1039.80) scale(0.9359 1)" font-size="11.60" fill="#3d4346">1847.74</text>
<text transform="translate(1703.04 1031.30) scale(0.9909 1)" font-size="11.60" fill="#3d4346">Z:</text>
<rect x="1756.0" y="1012.0" width="1" height="30.2" fill="#e4e1de"/>
<rect x="1777.1" y="1012.0" width="1" height="30.2" fill="#e4e1de"/>
<text transform="translate(1720.84 1031.30) scale(0.9522 1)" font-size="11.60" fill="#2e3436">256%</text>
<path d="M1760.4 1027.4H1774.0" stroke="#2e3436" stroke-width="1.3" fill="none"/>
<path d="M1781.4 1027.4H1795.6M1788.5 1020.3V1034.5" stroke="#2e3436" stroke-width="1.3" fill="none"/>
<text transform="translate(1810.91 1031.30) scale(0.9386 1)" font-size="11.60" fill="#3d4346">R:</text>
<rect x="1870.6" y="1012.0" width="1" height="30.2" fill="#e4e1de"/>
<rect x="1891.6" y="1012.0" width="1" height="30.2" fill="#e4e1de"/>
<text transform="translate(1835.26 1031.30) scale(0.9744 1)" font-size="11.60" fill="#2e3436">0.00°</text>
<path d="M1874.7 1027.4H1888.8" stroke="#2e3436" stroke-width="1.3" fill="none"/>
<path d="M1896.0 1027.4H1909.7M1902.8 1020.5V1034.2" stroke="#2e3436" stroke-width="1.3" fill="none"/>
<defs>
<linearGradient id="gl" x1="0" y1="0" x2="1" y2="1"><stop offset="0" stop-color="#eef3f9"/><stop offset="1" stop-color="#b9cadd"/></linearGradient>
<linearGradient id="pg" x1="0" y1="0" x2="1" y2="1"><stop offset="0" stop-color="#ffffff"/><stop offset="1" stop-color="#c9c9c2"/></linearGradient>
<linearGradient id="sq" x1="0" y1="0" x2="1" y2="1"><stop offset="0" stop-color="#dfe8f2"/><stop offset="1" stop-color="#9db4cf"/></linearGradient>
<linearGradient id="sq2" x1="0" y1="0" x2="1" y2="1"><stop offset="0" stop-color="#b5c7dc"/><stop offset="1" stop-color="#e4ecf5"/></linearGradient>
<radialGradient id="pk" cx=".35" cy=".3" r=".8"><stop offset="0" stop-color="#ffeef0"/><stop offset="1" stop-color="#f59aa6"/></radialGradient>
<linearGradient id="lk" x1="0" y1="0" x2="0" y2="1"><stop offset="0" stop-color="#f9d83c"/><stop offset=".5" stop-color="#f2a60d"/><stop offset="1" stop-color="#fbe36a"/></linearGradient>
<linearGradient id="gr" x1="0" y1="0" x2="1" y2="1"><stop offset="0" stop-color="#5fc16b"/><stop offset="1" stop-color="#e9f7ea"/></linearGradient>
<linearGradient id="tw" x1="0" y1="0" x2="0" y2="1"><stop offset="0" stop-color="#8d8d8d"/><stop offset="1" stop-color="#d8d8d8"/></linearGradient>
<linearGradient id="er" x1="0" y1="0" x2="0" y2="1"><stop offset="0" stop-color="#f8cdb9"/><stop offset="1" stop-color="#ec9c80"/></linearGradient>
</defs>
<g transform="translate(14.40 61.30)"><g fill="none" stroke="#2e3436" stroke-width="2" stroke-linecap="round" stroke-linejoin="round"><path d="M9.5 1.5H4a2 2 0 0 0-2 2v9a2 2 0 0 0 2 2h2.5M9.5 1.5L13.5 5.5V8M12 9.8v5.4M9.3 12.5h5.4"/></g></g>
<g transform="translate(51.00 61.30)"><g fill="none" stroke="#2e3436" stroke-width="2" stroke-linecap="round" stroke-linejoin="round"><path d="M1.8 12.5V4a1.6 1.6 0 0 1 1.6-1.6H6l1.8 1.8h4.1A1.6 1.6 0 0 1 13.5 5.8V7M2 13.3L4.4 7.3h10.4l-2.3 5.4a1 1 0 0 1-.9.6H2.6a.7.7 0 0 1-.6-1z"/></g></g>
<g transform="translate(88.30 61.30)"><g fill="none" stroke="#2e3436" stroke-width="2" stroke-linecap="round" stroke-linejoin="round"><path d="M8 1.2v9.3M4.3 7.2L8 10.8l3.7-3.6M1.8 14.6h12.4"/></g></g>
<g transform="translate(125.50 61.30)"><rect x="3.8" y="1" width="8.4" height="2.4" rx=".8" fill="#2e3436"/><rect x=".6" y="4.2" width="14.8" height="8.2" rx="2.6" fill="#2e3436"/><rect x="4.3" y="9.2" width="7.4" height="4.8" rx=".8" fill="#f6f5f4" stroke="#2e3436" stroke-width="1.6"/></g>
<g transform="translate(177.00 61.30)"><path d="M5 .5h6l4 4v11H5z" fill="url(#pg)" stroke="#1a1a1a" stroke-width="1"/><path d="M11 .5v4h4" fill="#fff" stroke="#1a1a1a" stroke-width="1"/><path d="M.3 8.5h6.5" stroke="#000" stroke-width="1.4"/><path d="M6 5.8l3.4 2.7L6 11.2z" fill="#000"/></g>
<g transform="translate(213.70 61.30)"><path d="M1 .5h6l4 4v11H1z" fill="url(#pg)" stroke="#1a1a1a" stroke-width="1"/><path d="M7 .5v4h4" fill="#fff" stroke="#1a1a1a" stroke-width="1"/><path d="M6.5 8.5h7" stroke="#000" stroke-width="1.4"/><path d="M12.6 5.8L16 8.5l-3.4 2.7z" fill="#000"/></g>
<g transform="translate(265.30 61.30)"><g fill="none" stroke="#2e3436" stroke-width="2" stroke-linecap="round" stroke-linejoin="round"><path d="M6.3 1.9L1.1 7.1l5.2 5.2M1.5 7.1H12a3.3 3.3 0 0 1 0 6.6H9.8"/></g></g>
<g transform="translate(318.30 61.30) scale(-1 1)"><g fill="none" stroke="#c9c7c4" stroke-width="2" stroke-linecap="round" stroke-linejoin="round"><path d="M6.3 1.9L1.1 7.1l5.2 5.2M1.5 7.1H12a3.3 3.3 0 0 1 0 6.6H9.8"/></g></g>
<g transform="translate(353.40 61.30)"><g fill="none" stroke="#2e3436" stroke-width="2" stroke-linecap="round" stroke-linejoin="round"><path d="M4.8 10.2H3.3a2 2 0 0 1-2-2V3.3a2 2 0 0 1 2-2h4.9a2 2 0 0 1 2 2v1.2"/><rect x="5.6" y="5.6" width="9.2" height="9.2" rx="2"/></g></g>
<g transform="translate(390.70 61.30)"><g fill="none" stroke="#2e3436" stroke-width="1.8" stroke-linecap="round" stroke-linejoin="round"><circle cx="3.2" cy="3.9" r="2.1"/><circle cx="7.3" cy="12.6" r="2.1"/><path d="M5.2 5.2L15.2 6.6M8.2 10.6L12.8 1.4"/></g></g>
<g transform="translate(427.70 61.30)"><g fill="none" stroke="#2e3436" stroke-width="2" stroke-linecap="round" stroke-linejoin="round"><rect x="2.2" y="2.6" width="11.6" height="12" rx="2"/></g><rect x="5" y=".6" width="6" height="3.6" rx="1.2" fill="#2e3436"/></g>
<g transform="translate(478.80 61.30)"><path d="M12.4 12.4L14.2 14.2" stroke="#111" stroke-width="3.2" stroke-linecap="round"/><circle cx="7.3" cy="7.2" r="6.7" fill="url(#gl)" stroke="#23292b" stroke-width="1.5"/><rect x="2.8" y="3.6" width="8.6" height="6.8" fill="#fff" stroke="#000" stroke-width="1" stroke-dasharray="1 1"/></g>
<g transform="translate(516.10 61.30)"><path d="M12.4 12.4L14.2 14.2" stroke="#111" stroke-width="3.2" stroke-linecap="round"/><circle cx="7.3" cy="7.2" r="6.7" fill="url(#gl)" stroke="#23292b" stroke-width="1.5"/><rect x="3.2" y="3.3" width="4.6" height="4.6" fill="#f7df86" stroke="#7a6000" stroke-width=".9"/><rect x="6.2" y="6.2" width="4.8" height="4.8" fill="#f5c211" stroke="#7a6000" stroke-width=".9"/></g>
<g transform="translate(553.30 61.30)"><path d="M12.4 12.4L14.2 14.2" stroke="#111" stroke-width="3.2" stroke-linecap="round"/><circle cx="7.3" cy="7.2" r="6.7" fill="url(#gl)" stroke="#23292b" stroke-width="1.5"/><rect x="4" y="2.6" width="6.2" height="8.8" fill="url(#pg)" stroke="#555" stroke-width="1"/></g>
<g transform="translate(592.00 61.30)"><rect x="2.5" y="1.5" width="8" height="13" fill="url(#pg)"/><path d="M1.5 1v14M11.5 1v14M1 1.5h11M1 14.5h11" stroke="#777" stroke-width=".6"/><g fill="#111"><rect x="0" y="0" width="2.6" height="2.4"/><rect x="10.4" y="0" width="2.6" height="2.4"/><rect x="0" y="13.6" width="2.6" height="2.4"/><rect x="10.4" y="13.6" width="2.6" height="2.4"/></g></g>
<g transform="translate(641.50 61.30)"><rect x=".6" y=".6" width="10" height="10" fill="url(#sq2)" stroke="#2e3b4c" stroke-width="1.1"/><rect x="4.6" y="4.6" width="10.8" height="10.8" fill="url(#sq)" stroke="#2e3b4c" stroke-width="1.1"/></g>
<g transform="translate(679.20 61.30)"><rect x=".6" y=".6" width="10" height="10" fill="url(#sq2)" stroke="#2e3b4c" stroke-width="1.1"/><rect x="4.6" y="4.6" width="10.8" height="10.8" fill="url(#sq)" stroke="#2e3b4c" stroke-width="1.1"/><path d="M8.2 10V8.6a2 2 0 0 1 4 0V10" fill="none" stroke="#222" stroke-width="1.3"/><rect x="7" y="9.8" width="6.6" height="4.4" fill="#f5c211" stroke="#4a3800" stroke-width=".8"/></g>
<g transform="translate(716.10 61.30)"><rect x=".6" y=".6" width="10" height="10" fill="url(#sq2)" stroke="#2e3b4c" stroke-width="1.1"/><rect x="4.6" y="4.6" width="10.8" height="10.8" fill="url(#sq)" stroke="#2e3b4c" stroke-width="1.1"/><path d="M8.2 10V8.2a2 2 0 0 1 4 0" fill="none" stroke="#222" stroke-width="1.3"/><rect x="7" y="9.8" width="6.6" height="4.4" fill="#6fcf2a" stroke="#214a00" stroke-width=".8"/></g>
<g transform="translate(767.00 61.30)"><g fill="#111"><rect x="0" y="0" width="2.2" height="2.2"/><rect x="13.8" y="0" width="2.2" height="2.2"/><rect x="0" y="13.8" width="2.2" height="2.2"/><rect x="13.8" y="13.8" width="2.2" height="2.2"/></g><path d="M1 1h14v14H1z" fill="none" stroke="#333" stroke-width=".7" stroke-dasharray="1.2 1.6"/><rect x="2.6" y="7.4" width="8.2" height="6" fill="#b6cbe2" stroke="#506f90" stroke-width=".8"/><circle cx="10" cy="5.6" r="3.9" fill="#d9e5f2" stroke="#6d89a8" stroke-width=".8"/></g>
<g transform="translate(804.30 61.30)"><g fill="#111"><rect x="0" y="0" width="2.2" height="2.2"/><rect x="13.8" y="0" width="2.2" height="2.2"/><rect x="0" y="13.8" width="2.2" height="2.2"/><rect x="13.8" y="13.8" width="2.2" height="2.2"/></g><path d="M1 1h14v14H1z" fill="none" stroke="#333" stroke-width=".7" stroke-dasharray="1.2 1.6"/><circle cx="10.2" cy="5" r="3.9" fill="#d9e5f2" stroke="#6d89a8" stroke-width=".8"/><rect x="3" y="8.6" width="8.4" height="5" fill="#f5c211" stroke="#806000" stroke-width=".8"/><path d="M5.4 9.4h3v2.4h-3z" fill="#fff8d0"/></g>
<g transform="translate(855.70 61.30)"><path d="M.4 .6H15.400L.4 15.400z" fill="#fff"/><path d="M0 .7h15.600" stroke="#000" stroke-width="1.300"/><path d="M.7 0v15.400" stroke="#000" stroke-width="1.500"/><path d="M-.1 15.500C4 15.500 7.200 14.600 9.200 12.200L13.800 7.800 12.400 5 7.500 9.500C5 12.500 2 14.600-.1 15.500z" fill="#0a0a0a"/><path d="M12.300 5.300L15.900 1.500l.3 6.600-2.200-.2z" fill="#f5a800"/><path d="M13.400 4.600l2.400-2.600.1 3z" fill="#fce94f"/></g>
<text font-family="Liberation Serif" font-weight="bold" font-size="22.8" transform="translate(892.2 77.4) scale(1.11 1)" fill="#000" style="font-family:'Liberation Serif',serif">T</text>
<g transform="translate(930.00 61.30)"><g fill="#0a0a0a"><path d="M2.300 2h9.200L8.600 4.800H-.1z"/><path d="M4.300 6.900h9.500L11.400 9.800H2z"/><path d="M6.800 11.700h9L13.100 14.700H4.300z"/></g></g>
<g transform="translate(967.00 61.30)"><rect x=".6" y=".6" width="14.8" height="14.8" fill="#f2f2f0" stroke="#111" stroke-width="1.1"/><rect x="1.2" y="1.2" width="13.6" height="2.6" fill="#9db4d2"/><path d="M1 4.2h14" stroke="#111" stroke-width=".8"/><path d="M6.6 6.8L3.8 9.8l2.8 3M9.4 6.8l2.8 3-2.8 3" fill="none" stroke="#333" stroke-width="1.2"/></g>
<g transform="translate(1004.20 61.30)"><rect x=".6" y=".6" width="14.8" height="14.8" fill="#f2f2f0" stroke="#111" stroke-width="1.1"/><rect x="1.2" y="1.2" width="13.6" height="2.6" fill="#9db4d2"/><path d="M1 4.2h14" stroke="#111" stroke-width=".8"/><path d="M6.6 6.4c-1.4 0-1.2 1-1.2 2s-.3 1.3-1.2 1.4c.9.1 1.2.4 1.2 1.4s-.2 2 1.2 2M9.4 6.4c1.4 0 1.2 1 1.2 2s.3 1.3 1.2 1.4c-.9.1-1.2.4-1.2 1.4s.2 2-1.2 2" fill="none" stroke="#333" stroke-width="1.1"/></g>
<g transform="translate(1041.00 61.30)"><path d="M1 0v16" stroke="#e01b24" stroke-width="1.3"/><g fill="#aac1dd" stroke="#3c5d84" stroke-width=".9"><rect x="3.2" y="1" width="6.4" height="3.6"/><rect x="3.2" y="6.2" width="12" height="3.6"/><rect x="3.2" y="11.4" width="8.6" height="3.6"/></g></g>
<g transform="translate(1092.70 61.30)"><g fill="none" stroke="#2e3436" stroke-width="1.9" stroke-linecap="round" stroke-linejoin="round"><path d="M6.8 14.6H4a2 2 0 0 1-2-2V2.7a2 2 0 0 1 2-2h5.6l4.2 4.2v7.4"/></g><circle cx="7.7" cy="8.7" r="3.1" fill="#2e3436"/><path d="M7.3 8.3L5.8 4.6" stroke="#f6f5f4" stroke-width="2.1"/><path d="M8.6 9.8L12.6 14.4" stroke="#2e3436" stroke-width="2.7" stroke-linecap="round"/></g>
<g transform="translate(1130.00 61.30)"><path d="M3.6 3.5L12.2 12.1" stroke="#2e3436" stroke-width="2.5"/><circle cx="3.5" cy="3.4" r="3.3" fill="#2e3436"/><circle cx="12.3" cy="12.2" r="3.3" fill="#2e3436"/><path d="M3.3 3.2L-.6 -.7M12.5 12.400L16.400 16.300" stroke="#f6f5f4" stroke-width="2.3"/><path d="M5.100 10L12.300 2.700" stroke="#f6f5f4" stroke-width="2.400"/><path d="M1.100 14.300L5.200 9.900" stroke="#2e3436" stroke-width="2.700" stroke-linecap="round"/><path d="M5.200 9.900L12.400 2.700" stroke="#2e3436" stroke-width="1"/><path d="M12.500 2.800L14 1.300" stroke="#2e3436" stroke-width="2.500" stroke-linecap="round"/></g>
<g transform="translate(1860.00 61.30)"><path d="M4.4 4.4L11.6 11.4" stroke="#111" stroke-width="1.2"/><path d="M12.6 12.4L8.6 11l2.6-2.6z" fill="#111"/><path d="M3 .6L5.6 3.2 3 5.8.4 3.2z" fill="#d8d8ff" stroke="#3a3aff" stroke-width="1.3"/><path d="M13.2 10.4l2.6 2.6-2.6 2.6-2.6-2.6z" fill="#d8ffd8" stroke="#2ea043" stroke-width="1.3"/></g>
<g transform="translate(14.10 103.60)"><path d="M8 .3v7.4M4.3 4h7.4" stroke="#000" stroke-width="2"/><path d="M0 12.6h16" stroke="#8a8a8a" stroke-width="1.2"/><rect x="5.85" y="10.10" width="4.30" height="5.00" rx=".4" fill="#9494ff" stroke="#1414ff" stroke-width="1.4" opacity="1.0"/></g>
<path d="M52.3 108.3h11.8l-5.9 6.5z" fill="#2e3436"/>
<g transform="translate(87.30 103.60)"><path d="M4.3 4h7.4" stroke="#000" stroke-width="2"/><path d="M0 12.6h16" stroke="#bcbcbc" stroke-width="1.2"/><rect x="5.85" y="10.10" width="4.30" height="5.00" rx=".4" fill="#dcdcff" stroke="#7c7cff" stroke-width="1.3"/></g>
<g transform="translate(138.30 103.60)"><rect x="1.51" y="0.00" width="3.78" height="4.40" rx=".4" fill="#dcdcff" stroke="#7c7cff" stroke-width="1.3"/><rect x="10.71" y="0.00" width="3.78" height="4.40" rx=".4" fill="#dcdcff" stroke="#7c7cff" stroke-width="1.3"/><path d="M8 5.400v3" stroke="#000" stroke-width="1.3"/><path d="M5.600 7.400h4.800L8 10.300z" fill="#000"/><path d="M.5 13.4h15" stroke="#8a8a8a" stroke-width="1.2"/><rect x="6.02" y="11.10" width="3.96" height="4.60" rx=".4" fill="#9494ff" stroke="#1414ff" stroke-width="1.4" opacity="1.0"/></g>
<g transform="translate(175.00 103.60)"><path d="M.5 2.2h15" stroke="#8a8a8a" stroke-width="1.2"/><rect x="6.11" y="0.00" width="3.78" height="4.40" rx=".4" fill="#dcdcff" stroke="#7c7cff" stroke-width="1.3"/><path d="M8 5.400v3" stroke="#000" stroke-width="1.3"/><path d="M5.600 7.400h4.800L8 10.300z" fill="#000"/><rect x="1.42" y="11.10" width="3.96" height="4.60" rx=".4" fill="#9494ff" stroke="#1414ff" stroke-width="1.4" opacity="1.0"/><rect x="10.62" y="11.10" width="3.96" height="4.60" rx=".4" fill="#9494ff" stroke="#1414ff" stroke-width="1.4" opacity="1.0"/></g>
<g transform="translate(226.00 103.60)"><rect x="1.51" y="0.00" width="3.78" height="4.40" rx=".4" fill="#dcdcff" stroke="#7c7cff" stroke-width="1.3"/><rect x="10.71" y="0.00" width="3.78" height="4.40" rx=".4" fill="#dcdcff" stroke="#7c7cff" stroke-width="1.3"/><path d="M8 5.400v3" stroke="#000" stroke-width="1.3"/><path d="M5.600 7.400h4.800L8 10.300z" fill="#000"/><path d="M3 13.4h10" stroke="#8a8a8a" stroke-width="1.2"/><rect x="1.42" y="11.10" width="3.96" height="4.60" rx=".4" fill="#9494ff" stroke="#1414ff" stroke-width="1.4" opacity="1.0"/><rect x="10.62" y="11.10" width="3.96" height="4.60" rx=".4" fill="#9494ff" stroke="#1414ff" stroke-width="1.4" opacity="1.0"/></g>
<g transform="translate(263.40 103.60)"><path d="M3 2.2h10" stroke="#8a8a8a" stroke-width="1.2"/><rect x="1.51" y="0.00" width="3.78" height="4.40" rx=".4" fill="#dcdcff" stroke="#7c7cff" stroke-width="1.3"/><rect x="10.71" y="0.00" width="3.78" height="4.40" rx=".4" fill="#dcdcff" stroke="#7c7cff" stroke-width="1.3"/><path d="M8 5.400v3" stroke="#000" stroke-width="1.3"/><path d="M5.600 7.400h4.800L8 10.300z" fill="#000"/><rect x="1.42" y="11.10" width="3.96" height="4.60" rx=".4" fill="#9494ff" stroke="#1414ff" stroke-width="1.4" opacity="1.0"/><rect x="10.62" y="11.10" width="3.96" height="4.60" rx=".4" fill="#9494ff" stroke="#1414ff" stroke-width="1.4" opacity="1.0"/></g>
<g transform="translate(315.40 103.60)"><path d="M.8 1.2C5.2 2 6.4 7 8 12.4C11 10 14.2 6 15.4 1.4" fill="none" stroke="#6a6a6a" stroke-width="1.3"/><path d="M8 9.6l2.9 2.9L8 15.4l-2.9-2.9z" fill="#7d7dff" stroke="#1414ff" stroke-width="1.2"/></g>
<g transform="translate(352.10 103.60)"><path d="M.6 .8C.6 7.600 3.400 12 8 12S15.400 7.600 15.400 .8" fill="none" stroke="#6a6a6a" stroke-width="1.3"/><rect x="5.94" y="9.60" width="4.13" height="4.80" rx=".4" fill="#9494ff" stroke="#1414ff" stroke-width="1.4" opacity="1.0"/></g>
<g transform="translate(389.80 103.60)"><path d="M.6 .8C.6 7.600 3.400 12 8 12S15.400 7.600 15.400 .8" fill="none" stroke="#6a6a6a" stroke-width="1.3"/><path d="M1 12.2h14" stroke="#5a5aff" stroke-width="1.2"/><circle cx="1.4" cy="12.2" r="1.5" fill="#1414ff"/><circle cx="14.6" cy="12.2" r="1.5" fill="#1414ff"/><rect x="5.85" y="9.70" width="4.30" height="5.00" rx=".4" fill="#9494ff" stroke="#1414ff" stroke-width="1.4" opacity="1.0"/></g>
<g transform="translate(426.80 103.60)"><path d="M.6 .8C.6 7.600 3.400 12 8 12S15.400 7.600 15.400 .8" fill="none" stroke="#6a6a6a" stroke-width="1.3"/><circle cx="8" cy="12.2" r="2.6" fill="#7d7dff" stroke="#1414ff" stroke-width="1.3"/></g>
<g transform="translate(478.10 103.60)"><path d="M2.6 13.4L13.4 2.6" fill="none" stroke="#6a6a6a" stroke-width="1.3"/><rect x="0.62" y="11.10" width="3.96" height="4.60" rx=".4" fill="#9494ff" stroke="#1414ff" stroke-width="1.4" opacity="1.0"/><rect x="11.42" y="0.30" width="3.96" height="4.60" rx=".4" fill="#9494ff" stroke="#1414ff" stroke-width="1.4" opacity="1.0"/></g>
<g transform="translate(515.20 103.60)"><path d="M2.6 13.4C2.6 7.4 7.4 2.6 13.4 2.6" fill="none" stroke="#6a6a6a" stroke-width="1.3"/><rect x="0.62" y="11.10" width="3.96" height="4.60" rx=".4" fill="#9494ff" stroke="#1414ff" stroke-width="1.4" opacity="1.0"/><rect x="11.42" y="0.30" width="3.96" height="4.60" rx=".4" fill="#9494ff" stroke="#1414ff" stroke-width="1.4" opacity="1.0"/></g>
<g transform="translate(566.20 103.60)"><path d="M8 2.200C3 1.700 1.500 4 1.500 6.500C1.500 8.500 2.500 9.500 4 9.500H8.400V11C8.400 13.500 10.400 14.400 14 14.400" fill="none" stroke="#6a6a6a" stroke-width="1.3"/><rect x="6.37" y="0.30" width="3.27" height="3.80" rx=".4" fill="#9494ff" stroke="#1414ff" stroke-width="1.4" opacity="1.0"/><rect x="2.17" y="7.50" width="3.27" height="3.80" rx=".4" fill="#9494ff" stroke="#1414ff" stroke-width="1.4" opacity="1.0"/><rect x="12.37" y="12.30" width="3.27" height="3.80" rx=".4" fill="#9494ff" stroke="#1414ff" stroke-width="1.4" opacity="1.0"/></g>
<g transform="translate(603.20 103.60)"><path d="M1 13.6L9 1h7L8 14.2z" fill="#b9d3f0" opacity=".8"/><rect x="6.05" y="0.60" width="3.10" height="3.60" rx=".4" fill="#9494ff" stroke="#1414ff" stroke-width="1.4" opacity="1.0"/><rect x="1.05" y="5.20" width="3.10" height="3.60" rx=".4" fill="#9494ff" stroke="#1414ff" stroke-width="1.4" opacity="1.0"/><rect x="10.05" y="4.60" width="3.10" height="3.60" rx=".4" fill="#9494ff" stroke="#1414ff" stroke-width="1.4" opacity="1.0"/><rect x="4.85" y="9.60" width="3.10" height="3.60" rx=".4" fill="#9494ff" stroke="#1414ff" stroke-width="1.4" opacity="1.0"/></g>
<g transform="translate(990.30 103.60)"><g opacity="1"><path d="M1.4 14.4C3 8 7 3.4 12.8 1.8" fill="none" stroke="#27d34b" stroke-width="1.7"/><path d="M5 8.2c3-.6 5 2.6 2.4 6M6.6 6.2c2.6-1.6 5.4-.8 6.6.6" fill="none" stroke="#333" stroke-width="1.2"/><circle cx="1.6" cy="14.2" r="1.6" fill="#1414ff"/><circle cx="13" cy="1.8" r="1.6" fill="#1414ff"/></g></g>
<g transform="translate(1027.50 103.60)"><g opacity="1"><path d="M1.4 14.4C3 8 7 3.4 12.8 1.8" fill="none" stroke="#3c3cff" stroke-width="1.7"/><path d="M5 8.2c3-.6 5 2.6 2.4 6M6.6 6.2c2.6-1.6 5.4-.8 6.6.6" fill="none" stroke="#333" stroke-width="1.2"/><circle cx="1.6" cy="14.2" r="1.6" fill="#1414ff"/><circle cx="13" cy="1.8" r="1.6" fill="#1414ff"/></g></g>
<g transform="translate(1064.70 103.60)"><g opacity=".33"><path d="M1.4 14.4C3 8 7 3.4 12.8 1.8" fill="none" stroke="#27a34b" stroke-width="1.7" stroke-dasharray="2 1"/><circle cx="1.6" cy="14.2" r="1.6" fill="#1414ff"/><circle cx="13" cy="1.8" r="1.6" fill="#1414ff"/><path d="M9 8.6l6 3.2-6 3.2z" fill="#f5e06a" stroke="#8a7a30" stroke-width=".8"/><path d="M15.6 8.4v6.8" stroke="#777" stroke-width="1"/></g></g>
<g transform="translate(1115.50 103.60)"><path d="M3 3l10 10M13 3L3 13" stroke="#000" stroke-width="2.6"/><g fill="#000"><path d="M0 0h6.2L0 6.2z"/><path d="M16 0H9.8L16 6.2z"/><path d="M0 16h6.2L0 9.8z"/><path d="M16 16H9.8L16 9.8z"/></g><circle cx="8" cy="8" r="1.500" fill="#f6f5f4"/></g>
<g transform="translate(1153.00 103.60)"><path d="M4.4 12.4C5 6.6 9.6 3.2 15.6 2.6" fill="none" stroke="#6a6a6a" stroke-width="1.3"/><path d="M4.4 12V3" stroke="#1414ff" stroke-width="1.1"/><circle cx="4.4" cy="2.4" r="1.7" fill="#7d7dff" stroke="#1414ff" stroke-width="1"/><rect x="2.25" y="10.10" width="4.30" height="5.00" rx=".4" fill="#9494ff" stroke="#1414ff" stroke-width="1.4" opacity="1.0"/></g>
<g transform="translate(1190.00 103.60)"><path d="M3 13C2.4 6.2 7 1.8 13 3C13.6 9.4 9 14 3 13z" fill="none" stroke="#ff1f1f" stroke-width="1.400"/><rect x=".8" y="10.8" width="4.4" height="4.4" fill="#e8e8ff" stroke="#1414ff" stroke-width="1.2"/><rect x="10.8" y=".8" width="4.4" height="4.4" fill="#e8e8ff" stroke="#1414ff" stroke-width="1.2"/></g>
<path d="M10.7 142.4v10.6l2.5-2.4 1.9 4.2 1.7-.8-1.9-4.1 3.4-.2z" fill="#000"/>
<path d="M11.6 177.2L21 174.6M11.6 177.2L8.6 187" stroke="#777" stroke-width=".8" fill="none"/>
<rect x="20.08" y="173.30" width="2.24" height="2.60" rx=".4" fill="#dcdcff" stroke="#7c7cff" stroke-width="1.3"/><rect x="7.48" y="185.70" width="2.24" height="2.60" rx=".4" fill="#dcdcff" stroke="#7c7cff" stroke-width="1.3"/>
<rect x="9.2" y="175" width="5" height="4.8" fill="#5a5aff" stroke="#1414ff" stroke-width="1.2"/>
<path d="M13 179.6l7.8 4.6-3.4 2.8z" fill="#000"/>
<rect x="8.5" y="207.5" width="13.4" height="13" fill="url(#sq)" stroke="#2e3436" stroke-width="1"/>
<circle cx="15.1" cy="246" r="6.7" fill="url(#pk)" stroke="#111" stroke-width="1"/>
<path d="M12.4 271.6l5.2 2.2 .6 5-5.2 3.8-5-3.2.6-5.8z" fill="#fbf3a8" stroke="#6a6a6a" stroke-width=".9"/>
<path d="M16.4 275.4l2 3.2 3.9.3-2.6 2.8.9 3.6-3.7-1.6-3.5 1.9.6-3.8-2.8-2.6 3.8-.6z" fill="#fce94f" stroke="#5a5a5a" stroke-width=".9"/>
<path d="M14.9 302.2l6.6 3.6v8.2l-6.6 4-6.6-4v-8.2z" fill="#8b90c9"/><path d="M14.9 302.2l6.6 3.6v8.2l-6.8-3.6z" fill="#dcdff4"/><path d="M8.3 314l6.4-3.6 6.8 3.6-6.6 4z" fill="#34378a"/><path d="M14.9 302.2l6.6 3.6v8.2l-6.6 4-6.6-4v-8.2z" fill="none" stroke="#60628f" stroke-width=".6"/>
<path d="M14.5 341.7L14.6 341.6L14.8 341.5L14.9 341.5L15.1 341.5L15.3 341.5L15.5 341.5L15.7 341.6L15.9 341.8L16.1 342.0L16.2 342.2L16.3 342.4L16.3 342.7L16.3 343.0L16.3 343.3L16.2 343.6L16.0 343.9L15.8 344.2L15.5 344.4L15.2 344.6L14.8 344.7L14.4 344.8L14.0 344.8L13.5 344.7L13.1 344.5L12.7 344.3L12.4 344.0L12.1 343.6L11.8 343.2L11.7 342.7L11.6 342.2L11.6 341.6L11.7 341.1L11.9 340.6L12.1 340.1L12.5 339.6L13.0 339.2L13.5 338.9L14.1 338.7L14.7 338.5L15.4 338.5L16.1 338.6L16.7 338.8L17.3 339.1L17.9 339.6L18.4 340.1L18.8 340.7L19.1 341.4L19.3 342.1L19.3 342.9L19.3 343.7L19.1 344.5L18.7 345.2L18.2 345.9L17.7 346.5L17.0 347.0L16.2 347.4L15.3 347.7L14.4 347.8L13.5 347.8L12.6 347.6L11.7 347.2L10.9 346.7L10.2 346.1L9.6 345.3L9.1 344.4L8.7 343.5L8.6 342.5L8.6 341.4L8.7 340.4L9.1 339.4L9.6 338.5L10.3 337.6L11.1 336.9L12.0 336.3L13.1 335.8L14.2 335.6L15.3 335.5L16.5 335.6L17.6 335.9L18.7 336.4L19.7 337.1L20.6 338.0L21.3 339.0L21.9 340.1L22.2 341.3L22.4 342.6L22.3 343.9L22.0 345.2L21.5 346.4L20.8 347.5" fill="none" stroke="#2a2a2a" stroke-width=".95"/>
<path d="M8.2 368.4h9.4M8.6 368.6c3.600 3.400 4.600 9.400 2 13.400" fill="none" stroke="#222" stroke-width="1"/><rect x="7.400" y="379.800" width="3" height="3" fill="#fff" stroke="#222" stroke-width=".8"/><path d="M11.6 382c1.400-.2 2.800-1.200 3.400-2.400" fill="none" stroke="#222" stroke-width="1.100"/><path d="M14.600 379.600l3.200-7.400 3.400 1.700-4.200 6.700-2.200 1z" fill="#333"/><path d="M18 371.600l1.600-3.600 3.400 1.900-1.600 3.500z" fill="#6fb0e6"/><path d="M17.600 372.800l3.600 1.900" stroke="#f5c211" stroke-width="1"/>
<path d="M8.2 400.200c1.800-1.800 3 .2 1.400 2.200-1.600 2.200.8 2.800 1.800 1.200M11 410.400c.6 3 3.400 5 6.800 3.600 2-1 3-2.600 3-4.400" fill="none" stroke="#222" stroke-width="1"/><path d="M13 412.800l1-4.600 5.200-8.400c1.200-1 3.400.2 3 1.800l-5.200 8.600z" fill="#fff8dc" stroke="#222" stroke-width=".9"/><path d="M16.400 404.200l2.800-4.400c1.200-1 3.400.2 3 1.800l-2.800 4.600z" fill="#f5a800"/><path d="M13 412.800l.4-2 1.400.8z" fill="#111"/>
<path d="M7.600 432c2.600 1.400 3.800 4 3 7.600-.6 3-.2 5.600 1.400 7.800-3.400-.8-4.800-4-3.800-8 .8-3.200.8-5.400-.6-7.400z" fill="#111"/><path d="M12 447.600c3.400-.6 6.200-2.200 9.400-2.400" fill="none" stroke="#111" stroke-width="1.100"/><path d="M13.200 444.400l1-5 4-5.800 3.600 2.200-3.800 6z" fill="#f5d020" stroke="#222" stroke-width=".8"/><path d="M18.200 433.600l1.600-2.400 3.400 2.200-1.400 2.400z" fill="#4a90d9"/><path d="M17.400 434.800l3.800 2.200" stroke="#d01c1c" stroke-width="1.400"/><path d="M13.200 444.400l3-4" stroke="#222" stroke-width=".7"/>
<text font-weight="bold" font-size="19.5" transform="translate(8.3 479.3) scale(.88 1.06)" fill="#000" stroke="#000" stroke-width=".9" stroke-linejoin="round">A</text>
<path d="M21 465.500v14.500M19.600 465h2.800M19.600 480.400h2.800" stroke="#333" stroke-width=".8" fill="none"/>
<rect x="7.200" y="497" width="15" height="15" rx="1" fill="url(#gr)"/><path d="M11 501.400l8 6.800" stroke="#222" stroke-width="1.100"/><rect x="9.400" y="499.800" width="3.200" height="3.200" fill="#fff" stroke="#222" stroke-width=".9"/><rect x="17.400" y="506.600" width="3.200" height="3.200" fill="#fff" stroke="#222" stroke-width=".9"/>
<path d="M10.400 531.200l9.600.6.200 10-10.400-.4z" fill="#5fae9b" stroke="#3b7c6c" stroke-width=".6"/><g fill="#fff" stroke="#222" stroke-width=".9"><circle cx="10" cy="531.600" r="1.700"/><circle cx="20.200" cy="531.600" r="1.700"/><circle cx="10" cy="542" r="1.700"/><circle cx="20.200" cy="542" r="1.700"/></g>
<path d="M9.400 576.800c-.6-.8-.2-2 .6-2.200M10.400 573.600l6.600-7.200 1.800 1.600-6.600 7.400z" fill="#9fc2e4" stroke="#555" stroke-width=".8"/><path d="M16 565.600l1.600-2.600c1-1.600 3.200-2 4.600-.8 1.400 1.400 1 3.400-.4 4.400l-2.800 1.800.6.800-1.200 1.200-3.800-3.600 1.200-1.200z" fill="#111"/>
<ellipse cx="14.400" cy="606.400" rx="7.200" ry="1.900" fill="#8fd19e" stroke="#3c8a4d" stroke-width=".7"/><path d="M11.200 596l8-3 2.600 8.600c.2 1.400-6 3.800-7.400 2.600z" fill="#6fa3cf" stroke="#2c5378" stroke-width=".8"/><ellipse cx="15.200" cy="594.500" rx="4.300" ry="1.700" transform="rotate(-20 15.200 594.500)" fill="#c5dbee" stroke="#2c5378" stroke-width=".7"/><path d="M11.600 595.200c-2 1.600-2.800 5.600-1.400 10.800 1.400-.6 2-2 2-4.400z" fill="#4caf50"/>
<path d="M7 634.400c2.600-.2 4.400-1.400 5.600-4 1.400-3 4.600-4.600 7.400-3-1.600 0-3 .8-3.200 2.200 1-.8 2.600-.4 3 .8-1.600-.2-2.800.8-2.600 2.200.2 1.200 1.600 2 4.800 1.800v8H7z" fill="url(#tw)"/><path d="M12.600 630.400c1.400-3 4.600-4.600 7.400-3-1.600 0-3 .8-3.200 2.200 1-.8 2.600-.4 3 .8-1.600-.2-2.800.8-2.600 2.200" fill="none" stroke="#777" stroke-width="1.300"/>
<path d="M14.600 666.400l5.600-2.200 2.800 8.200c-1.400 1.600-4.600 2.600-6.200 1.400z" fill="#5eb536" stroke="#2d6a12" stroke-width=".8"/><path d="M15.400 664.400l2.800-1.200.8 2-2.800 1.200z" fill="#e8c030" stroke="#555" stroke-width=".6"/><path d="M16 662.400c.6-1.400 2.200-1.600 2.800-.4" fill="none" stroke="#333" stroke-width=".9"/><g fill="#222"><circle cx="9" cy="660" r=".7"/><circle cx="11.400" cy="661.400" r=".7"/><circle cx="9.200" cy="663.400" r=".7"/><circle cx="12.200" cy="664" r=".7"/><circle cx="10" cy="666.200" r=".7"/><circle cx="13.200" cy="662" r=".6"/></g>
<path d="M7 705h4.200M17.600 705h5" stroke="#a8a8a8" stroke-width="1.400"/><path d="M15.600 690.600l7 3.400-5 10.600-7-3.400z" fill="url(#er)" stroke="#666" stroke-width=".7"/><path d="M12.800 696.800l7 3.400-2.200 4.400-7-3.400z" fill="#2020e8"/>
<path d="M16.400 725.400h3.400l1.400 1.600v5M14.800 729.400v3.600M11 733v-2.400" fill="none" stroke="#333" stroke-width=".9"/><g fill="#b4cde6" stroke="#4a6d94" stroke-width=".8"><rect x="11" y="722.600" width="5" height="4.800"/><rect x="7.400" y="733.200" width="5" height="5"/><rect x="17.200" y="733.200" width="5" height="5"/></g><rect x="12.600" y="729" width="5.400" height="2.600" fill="#f5d34a" stroke="#8a6d00" stroke-width=".6"/>
<g transform="rotate(-28 14 764)"><rect x="9.800" y="755.800" width="8.200" height="16.200" fill="#f4c3ae" stroke="#555" stroke-width=".9"/><path d="M9.800 758.400h2.600M9.800 761h3.600M9.800 763.600h2.600M9.800 766.200h3.600M9.800 768.800h2.600" stroke="#555" stroke-width=".7"/></g>
<path d="M16.800 797.600l5 5" stroke="#e89a10" stroke-width="3" stroke-linecap="round"/><path d="M15.600 796.400l1.800 1.800" stroke="#555" stroke-width="2.200"/><circle cx="12.400" cy="793.400" r="5" fill="#e4edf6" stroke="#444" stroke-width="1.100"/>
<path d="M13 821.600h6l3 3v9.400h-9z" fill="#f4f4f2" stroke="#333" stroke-width=".9"/><path d="M8.400 823.400h6l3 3v8.600h-9z" fill="url(#pg)" stroke="#111" stroke-width="1"/><path d="M14.400 823.400v3h3" fill="#fff" stroke="#111" stroke-width=".8"/>
<path d="M38.800 144.400v-2.400a4.200 4.200 0 0 1 8.400 0v2.400" fill="none" stroke="#1a1a1a" stroke-width="2"/><rect x="36.600" y="143.600" width="12.800" height="8.600" rx="1" fill="url(#lk)" stroke="#3a2c00" stroke-width=".9"/><path d="M43 146.200a1 1 0 0 1 1 1l-.4 2.200h-1.200l-.4-2.200a1 1 0 0 1 1-1z" fill="#111"/>
<g fill="none" stroke="#111" stroke-width="1.300" stroke-linecap="round"><path d="M345.200 1027.400c4.200-5.400 12.400-5.400 16.800 0-4.400 4.800-12.600 4.800-16.800 0z" stroke-width="1.600"/><path d="M347.200 1023.200l-1.500-2.300M350.400 1021.500l-.7-2.700M353.900 1021l.1-2.800M357.300 1021.600l1.100-2.500M360.200 1023.400l1.700-1.900"/></g><circle cx="353.600" cy="1027.200" r="3.400" fill="#111"/><circle cx="352.600" cy="1026.200" r=".9" fill="#fff"/>
<path d="M385.600 1027v-3.400c0-4.200 6.400-5 7.600-1.200l.4 2" fill="none" stroke="#111" stroke-width="1.500"/><rect x="384.600" y="1026.400" width="10.400" height="8.200" rx="1" transform="rotate(-8 389.800 1030.500)" fill="#f2e27a" stroke="#3a3000" stroke-width=".9"/><path d="M390 1029.200a.9.900 0 0 1 .9.900l-.3 1.800h-1.200l-.3-1.800a.9.900 0 0 1 .9-.9z" fill="#111"/>
<path d="M1909 958.800L1920.800 969.400L1910.300 974.400z" fill="none" stroke="#1c3a1c" stroke-opacity=".55" stroke-width=".8" stroke-linejoin="round"/>
<defs><linearGradient id="ik" x1="0" y1="0" x2=".35" y2="1"><stop offset="0" stop-color="#ffffff"/><stop offset=".45" stop-color="#e8eef5"/><stop offset=".75" stop-color="#2c4a73"/><stop offset="1" stop-color="#05080c"/></linearGradient></defs>
<path d="M9.65 2.700L18.100 10.700Q18.300 11.600 17 11.900L14.200 12.300 15 13.500 12.600 14.300 13.100 15.500 11.500 16.200 12 17.300 9.700 18.900 7.400 17.700 8.200 16.500 6 15.900 6.900 14.700 4 13.700 5.300 12.300 2.600 11.900Q1.500 11.500 1.900 10.700z" fill="#000"/>
<path d="M9.65 4.500L15.800 10.300 13 10.900 11.400 9.600 9.600 11 7.800 9.800 6 11 3.700 10.300z" fill="url(#ik)"/>
<ellipse cx="4.800" cy="16.500" rx="1.100" ry=".55" fill="#000"/><ellipse cx="15.900" cy="14.500" rx="1.100" ry=".5" fill="#000"/><circle cx="15.400" cy="16.400" r=".6" fill="#000"/>
</svg>
</body></html>
